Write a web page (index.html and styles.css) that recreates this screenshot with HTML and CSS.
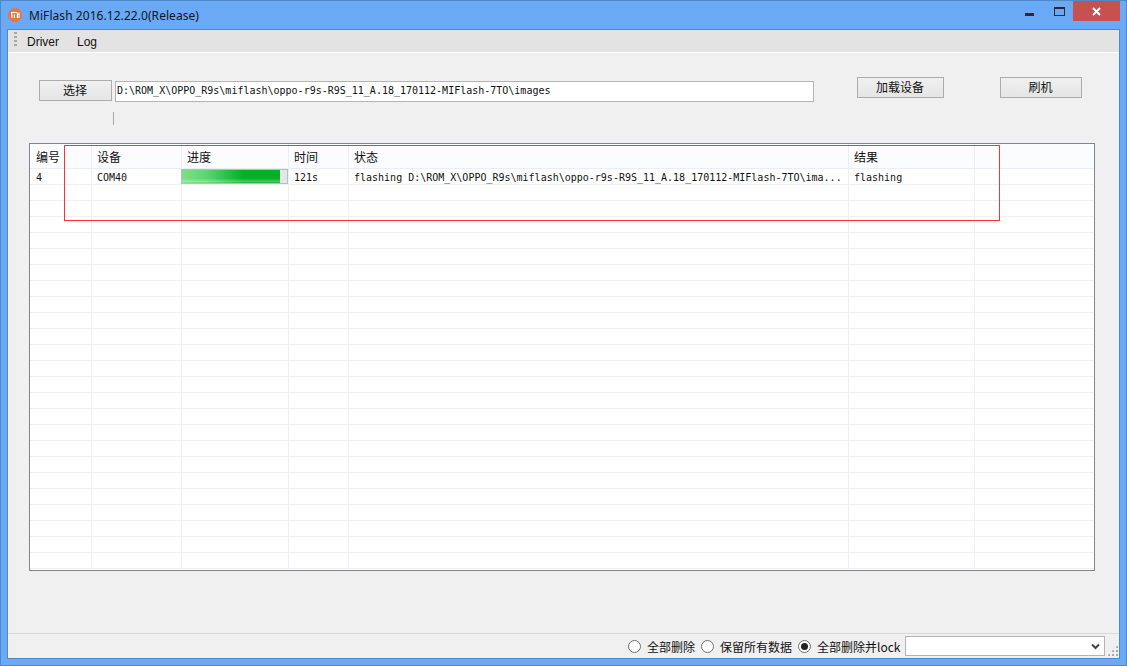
FILE: index.html
```
<!DOCTYPE html>
<html lang="zh">
<head>
<meta charset="utf-8">
<title>MiFlash</title>
<link rel="stylesheet" href="styles.css">
</head>
<body>
<div class="window">
  <header class="titlebar">
    <svg class="logo" width="16" height="16" viewBox="0 0 16 16"><circle cx="8" cy="8" r="7" fill="#e8763a"/><path d="M4 5.5h5.2a1.2 1.2 0 0 1 1.2 1.2v4.3M4.8 5.5V11M7.4 7.5V11M12 5.5V11" fill="none" stroke="#fff" stroke-width="1.2"/></svg>
    <span class="title">MiFlash 2016.12.22.0(Release)</span>
    <div class="controls">
      <span class="ctl"><svg width="9" height="3" viewBox="0 0 9 3"><rect width="9" height="3" y="0" fill="#2b2b2b"/></svg></span>
      <span class="ctl ctl-max"><svg width="11" height="9" viewBox="0 0 11 9"><rect x=".5" y="1" width="10" height="7.5" fill="none" stroke="#2b2b2b"/><rect width="11" height="2" fill="#2b2b2b"/></svg></span>
      <span class="ctl-close"><svg width="9" height="9" viewBox="0 0 9 9"><path d="M1 1l7 7M8 1l-7 7" stroke="#fff" stroke-width="2"/></svg></span>
    </div>
  </header>
  <main class="client">
    <nav class="menubar">
      <span class="grip"></span>
      <span class="menu-item">Driver</span>
      <span class="menu-item">Log</span>
    </nav>
    <section class="toolbar">
      <div class="toolbar-row">
        <button class="btn btn-pick">选择</button>
        <div class="path">D:\ROM_X\OPPO_R9s\miflash\oppo-r9s-R9S_11_A.18_170112-MIFlash-7TO\images</div>
        <button class="btn btn-load">加载设备</button>
        <button class="btn btn-flash">刷机</button>
      </div>
      <div class="tick"></div>
    </section>
    <section class="grid-wrap">
      <table class="grid">
        <colgroup><col class="c1"><col class="c2"><col class="c3"><col class="c4"><col class="c5"><col class="c6"><col></colgroup>
        <thead><tr><th>编号</th><th>设备</th><th>进度</th><th>时间</th><th>状态</th><th>结果</th><th></th></tr></thead>
        <tbody>
          <tr><td>4</td><td>COM40</td><td class="prog"><div class="bar"><div class="fill" style="width:98px"></div></div></td><td>121s</td><td>flashing D:\ROM_X\OPPO_R9s\miflash\oppo-r9s-R9S_11_A.18_170112-MIFlash-7TO\ima...</td><td>flashing</td><td></td></tr>
          <tr><td></td><td></td><td></td><td></td><td></td><td></td><td></td></tr>
          <tr><td></td><td></td><td></td><td></td><td></td><td></td><td></td></tr>
          <tr><td></td><td></td><td></td><td></td><td></td><td></td><td></td></tr>
          <tr><td></td><td></td><td></td><td></td><td></td><td></td><td></td></tr>
          <tr><td></td><td></td><td></td><td></td><td></td><td></td><td></td></tr>
          <tr><td></td><td></td><td></td><td></td><td></td><td></td><td></td></tr>
          <tr><td></td><td></td><td></td><td></td><td></td><td></td><td></td></tr>
          <tr><td></td><td></td><td></td><td></td><td></td><td></td><td></td></tr>
          <tr><td></td><td></td><td></td><td></td><td></td><td></td><td></td></tr>
          <tr><td></td><td></td><td></td><td></td><td></td><td></td><td></td></tr>
          <tr><td></td><td></td><td></td><td></td><td></td><td></td><td></td></tr>
          <tr><td></td><td></td><td></td><td></td><td></td><td></td><td></td></tr>
          <tr><td></td><td></td><td></td><td></td><td></td><td></td><td></td></tr>
          <tr><td></td><td></td><td></td><td></td><td></td><td></td><td></td></tr>
          <tr><td></td><td></td><td></td><td></td><td></td><td></td><td></td></tr>
          <tr><td></td><td></td><td></td><td></td><td></td><td></td><td></td></tr>
          <tr><td></td><td></td><td></td><td></td><td></td><td></td><td></td></tr>
          <tr><td></td><td></td><td></td><td></td><td></td><td></td><td></td></tr>
          <tr><td></td><td></td><td></td><td></td><td></td><td></td><td></td></tr>
          <tr><td></td><td></td><td></td><td></td><td></td><td></td><td></td></tr>
          <tr><td></td><td></td><td></td><td></td><td></td><td></td><td></td></tr>
          <tr><td></td><td></td><td></td><td></td><td></td><td></td><td></td></tr>
          <tr><td></td><td></td><td></td><td></td><td></td><td></td><td></td></tr>
          <tr><td></td><td></td><td></td><td></td><td></td><td></td><td></td></tr>
        </tbody>
      </table>
      <div class="highlight"></div>
    </section>
    <footer class="statusbar">
      <label class="opt opt-a"><span class="radio"></span>全部删除</label>
      <label class="opt opt-b"><span class="radio"></span>保留所有数据</label>
      <label class="opt opt-c"><span class="radio on"></span>全部删除并lock</label>
      <div class="combo"><svg width="9" height="7" viewBox="0 0 9 7"><path d="M1 1.5l3.5 3.5L8 1.5" fill="none" stroke="#444" stroke-width="2"/></svg></div>
      <span class="resize"></span>
    </footer>
  </main>
</div>
</body>
</html>
```
FILE: styles.css
```
* { box-sizing: border-box; }
html, body { margin: 0; padding: 0; }
body { font-family: "Open Sans", "Noto Sans CJK SC", sans-serif; font-size: 12px; color: #111; }
.window {
  width: 1127px; height: 666px; display: flex; flex-direction: column;
  background: #69a9f5; border: 1px solid #4f87c7; overflow: hidden;
}
.titlebar { height: 28px; flex: none; display: flex; align-items: center; padding-left: 6px; }
.logo { margin-right: 6px; margin-top: -1px; }
.title { font-family: "Noto Sans", sans-serif; font-size: 12px; color: #161616; margin-top: 0; letter-spacing: .06px; }
.controls { margin-left: auto; align-self: flex-start; display: flex; margin-right: 6px; }
.ctl { width: 26px; height: 19px; display: flex; align-items: flex-end; justify-content: center; padding-bottom: 4px; }
.ctl svg { display: block; }
.ctl-max { margin-left: 4px; margin-right: 1px; padding-bottom: 4px; }
.ctl-close { width: 47px; height: 20px; background: #c75050; display: flex; align-items: center; justify-content: center; }
.client {
  flex: 1; margin: 0 6px 6px 6px; background: #f0f0f0; border: 1px solid #4f87c7;
  display: flex; flex-direction: column; min-height: 0;
}
.menubar {
  height: 23px; flex: none; background: #e3e3e3; border-bottom: 1px solid #fff;
  display: flex; align-items: center; padding-left: 6px; font-family: "Liberation Sans", sans-serif;
}
.grip { width: 3px; height: 15px; margin-right: 10px; margin-top: -3px; background: repeating-linear-gradient(to bottom, #a8a8a8 0 2px, transparent 2px 4px); }
.menu-item { margin-right: 18px; margin-top: 2px; color: #111; }
.toolbar { height: 90px; flex: none; padding: 24px 0 0 31px; }
.toolbar-row { display: flex; align-items: flex-start; }
.btn {
  font-family: "Noto Sans CJK SC", sans-serif; font-size: 12px; line-height: 1; color: #111;
  height: 21px; padding: 0 1px 2px 0; border: 1px solid #acacac;
  background: linear-gradient(#f0f0f0, #e5e5e5);
}
.btn-pick { width: 73px; margin-top: 3px; }
.btn-load { width: 87px; margin-left: 43px; }
.btn-flash { width: 82px; margin-left: 56px; }
.path {
  width: 699px; height: 21px; margin: 4px 0 0 3px; background: #fff; border: 1px solid #b4b4b4;
  font-family: "DejaVu Sans Mono", monospace; font-size: 10px; line-height: 17px; padding-left: 1px; color: #111; white-space: nowrap;
}
.tick { width: 1px; height: 13px; margin: 10px 0 0 74px; background: #a8a8a8; }
.grid-wrap {
  position: relative; width: 1066px; height: 428px; margin-left: 21px; flex: none;
  background: #fff; border: 1px solid #82868c;
}
.grid { width: 1064px; border-collapse: separate; border-spacing: 0; table-layout: fixed; }
.c1 { width: 62px; } .c2 { width: 90px; } .c3 { width: 107px; } .c4 { width: 60px; } .c5 { width: 500px; } .c6 { width: 126px; }
.grid th {
  height: 25px; padding: 1px 0 0 5px; text-align: left; font-weight: 400; font-family: "Noto Sans CJK SC", sans-serif; font-size: 12px;
  background: #fbfcfe; border-right: 1px solid #e9eef6; border-bottom: 1px solid #e9eef6; color: #111;
}
.grid th:first-child { padding-left: 6px; }
.grid td {
  height: 16px; padding: 2px 0 0 5px; font-family: "DejaVu Sans Mono", monospace; font-size: 10px; line-height: 13px;
  border-right: 1px solid #f0f0f0; border-bottom: 1px solid #f0f0f0; white-space: nowrap; overflow: hidden; color: #111;
}
.grid td:first-child { padding-left: 6px; }
.grid th:last-child, .grid td:last-child { border-right: 0; }
.grid td.prog { padding: 0; overflow: visible; }
.bar { width: 107px; height: 15px; margin-left: -1px; background: #e6e6e6; border: 1px solid #bcbcbc; }
.fill {
  height: 100%;
  background:
    linear-gradient(to bottom, rgba(255,255,255,0) 65%, rgba(255,255,255,.3) 90%, rgba(255,255,255,0) 100%),
    linear-gradient(to right, #78e284, #5ed56c 25%, #06b025 62%);
}
.highlight { position: absolute; left: 34px; top: 1px; width: 936px; height: 76px; border: 1px solid #f33; }
.statusbar {
  margin-top: auto; height: 25px; flex: none; border-top: 1px solid #d9d9d9; position: relative;
  display: flex; align-items: center; font-family: "Noto Sans CJK SC", sans-serif; font-size: 12px;
}
.opt { display: flex; align-items: center; color: #111; }
.opt-a { margin-left: 620px; }
.opt-b { margin-left: 6px; }
.opt-c { margin-left: 6px; }
.radio { width: 13px; height: 13px; border-radius: 50%; border: 1px solid #707070; background: #fff; margin-right: 6px; display: flex; align-items: center; justify-content: center; }
.radio.on::after { content: ""; width: 7px; height: 7px; border-radius: 50%; background: #222; }
.combo { width: 200px; height: 20px; margin-left: 5px; background: #fff; border: 1px solid #b4b4b4; display: flex; align-items: center; justify-content: flex-end; padding-right: 4px; }
.resize {
  position: absolute; right: 1px; bottom: 2px; width: 11px; height: 11px;
  background: radial-gradient(circle, #a8a8a8 0 1px, transparent 1px) 0 0 / 4px 4px;
  clip-path: polygon(100% 0, 100% 100%, 0 100%);
}
```
